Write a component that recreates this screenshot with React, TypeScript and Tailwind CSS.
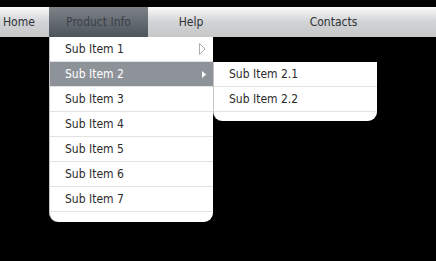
import React from 'react';

const items = ['Sub Item 1', 'Sub Item 2', 'Sub Item 3', 'Sub Item 4', 'Sub Item 5', 'Sub Item 6', 'Sub Item 7'];
const subItems = ['Sub Item 2.1', 'Sub Item 2.2'];

function OutlineArrow() {
  return (
    <svg width="7" height="12" viewBox="0 0 7 12" className="block">
      <path d="M0.5 0.5 L6 6 L0.5 11.5 Z" fill="none" stroke="#a9abae" strokeWidth="1" />
    </svg>
  );
}

function SolidArrow() {
  return (
    <svg width="4" height="7" viewBox="0 0 4 7" className="block">
      <path d="M0 0 L4 3.5 L0 7 Z" fill="#ffffff" />
    </svg>
  );
}

export default function App() {
  return (
    <div
      className="w-[436px] h-[261px] bg-black relative overflow-hidden text-[11px]"
      style={{ fontFamily: '"DejaVu Sans Condensed", "DejaVu Sans", sans-serif' }}
    >
      <div className="h-[7px]" />
      {/* nav bar */}
      <div className="h-[30px] w-full flex bg-gradient-to-b from-[#fafafa] via-[#d2d3d5] to-[#c6c7c9] text-[#2e3338] text-[12px]">
        <div className="w-[49px] flex items-center pl-[3px]">Home</div>
        <div className="w-[99px] flex items-center justify-center bg-gradient-to-b from-[#7c8288] to-[#4d545b] text-[#3a4047]">
          Product Info
        </div>
        <div className="w-[86px] flex items-center justify-center">Help</div>
        <div className="w-[199px] flex items-center justify-center">Contacts</div>
      </div>

      {/* dropdown */}
      <div className="absolute left-[49px] top-[37px] w-[164px] bg-white rounded-b-[9px] pb-[10px] border-l border-[#c4c4c4] text-[12px] text-[#2b2b2b]">
        {items.map((it, i) => (
          <div
            key={it}
            className={`h-[25px] flex items-center justify-between pl-[15px] pr-[7px] border-b border-[#e2e2e2] ${
              i === 1 ? 'bg-[#8e9399] text-white' : ''
            }`}
          >
            <span>{it}</span>
            {i === 0 && <OutlineArrow />}
            {i === 1 && <SolidArrow />}
          </div>
        ))}
      </div>

      {/* submenu */}
      <div className="absolute left-[213px] top-[62px] w-[164px] bg-white rounded-b-[9px] pb-[9px] border-l border-[#c4c4c4] text-[12px] text-[#2b2b2b]">
        {subItems.map(it => (
          <div key={it} className="h-[25px] flex items-center pl-[15px] border-b border-[#e2e2e2]">
            {it}
          </div>
        ))}
      </div>
    </div>
  );
}
